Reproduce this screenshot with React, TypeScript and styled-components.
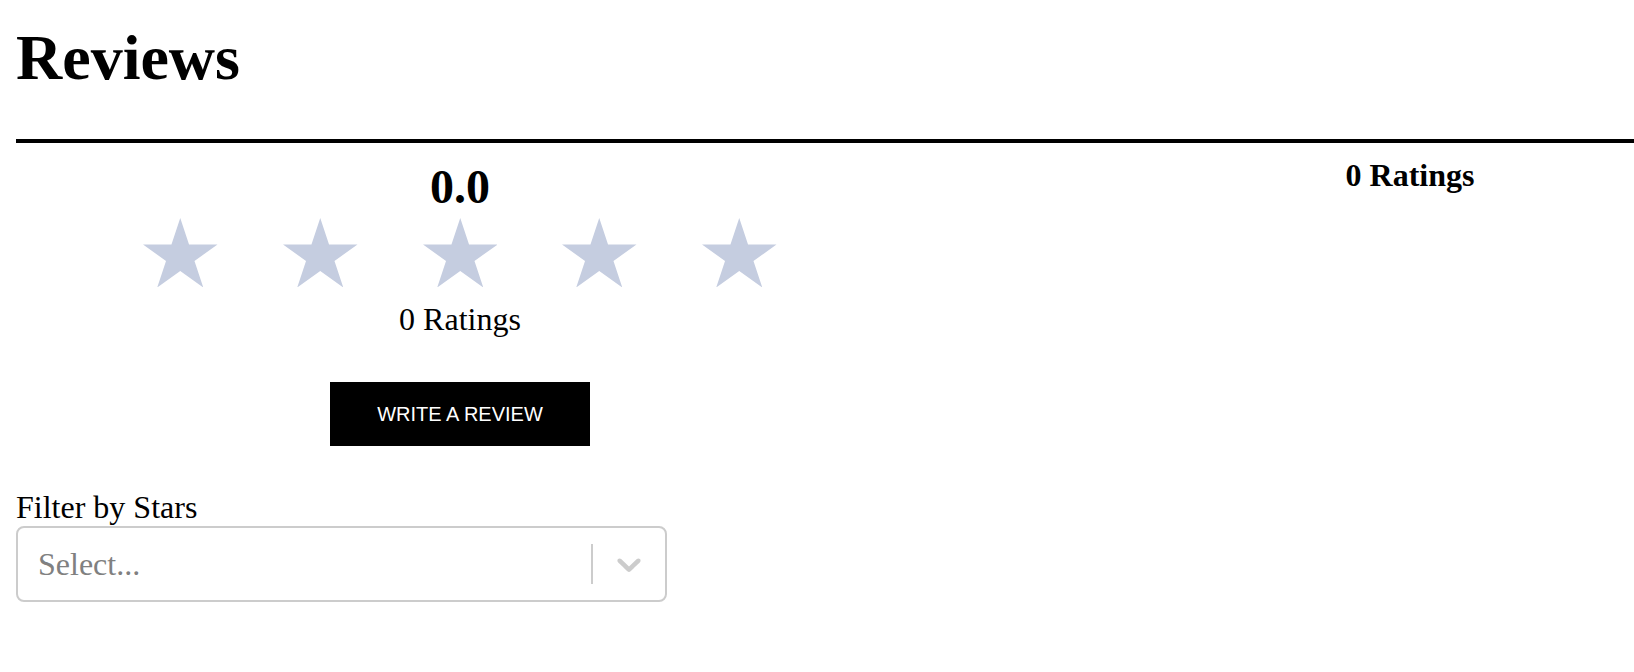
import React from "react";
import styled, { createGlobalStyle } from "styled-components";

const GlobalStyle = createGlobalStyle`
  html, body {
    margin: 0;
    padding: 0;
    background: #ffffff;
    overflow-x: hidden;
  }
  body {
    font-family: "Liberation Serif", "Times New Roman", Times, serif;
    font-size: 32px;
    color: #000000;
  }
  * { box-sizing: border-box; }
`;

const Page = styled.div`
  padding: 0 0 40px 16px;
`;

const Header = styled.header`
  padding: 21px 0 43.5px;
  border-bottom: 4px solid #000000;
`;

const Title = styled.h1`
  margin: 0;
  font-size: 64px;
  font-weight: 700;
  line-height: normal;
`;

const Summary = styled.section`
  display: flex;
  align-items: flex-start;
`;

const ScoreColumn = styled.div`
  width: 888px;
  display: flex;
  flex-direction: column;
  align-items: center;
`;

const Score = styled.h2`
  margin: 16px 0 0;
  font-size: 48px;
  font-weight: 700;
  line-height: normal;
`;

const StarRow = styled.div`
  margin-top: 4px;
  display: flex;
  gap: 65.2px;
`;

const StarIcon = styled.svg`
  display: block;
  width: 74.5px;
  height: 69.5px;
  fill: ${(p: { $filled?: boolean }) => (p.$filled ? "#ffd700" : "#c5cde0")};
`;

const RatingCount = styled.div`
  margin-top: 14px;
  font-size: 32px;
  line-height: normal;
`;

const WriteButton = styled.button`
  margin-top: 44px;
  width: 260px;
  height: 64px;
  border: none;
  border-radius: 0;
  background: #000000;
  color: #ffffff;
  font-family: "Liberation Sans", Arial, sans-serif;
  font-size: 20px;
  cursor: pointer;
`;

const Breakdown = styled.div`
  flex: 1;
  display: flex;
  justify-content: center;
  padding-left: 282px;
`;

const BreakdownTitle = styled.h4`
  margin: 14px 0 0;
  font-size: 32px;
  font-weight: 700;
  line-height: normal;
`;

const Filter = styled.div`
  margin-top: 43px;
  display: flex;
  flex-direction: column;
  align-items: flex-start;
`;

const FilterLabel = styled.label`
  font-size: 32px;
  line-height: normal;
`;

const SelectControl = styled.div`
  width: 651px;
  height: 76px;
  display: flex;
  align-items: stretch;
  border: 2px solid #cccccc;
  border-radius: 8px;
  background: #ffffff;
`;

const ValueContainer = styled.div`
  flex: 1;
  display: flex;
  align-items: center;
  padding: 4px 16px;
`;

const Placeholder = styled.span`
  margin: 0 4px;
  color: #808080;
  font-size: 32px;
`;

const Separator = styled.span`
  width: 2px;
  margin: 16px 0;
  background: #cccccc;
`;

const Indicator = styled.div`
  display: flex;
  align-items: center;
  padding: 16px;
  color: #cccccc;
`;

const Chevron = styled.svg`
  width: 40px;
  height: 40px;
  fill: currentColor;
`;

const Star = ({ filled }: { filled?: boolean }) => (
  <StarIcon
    $filled={filled}
    viewBox="-0.951 -1 1.902 1.809"
    preserveAspectRatio="none"
  >
    <polygon points="0,-1 0.2245,-0.309 0.951,-0.309 0.3633,0.118 0.588,0.809 0,0.382 -0.588,0.809 -0.3633,0.118 -0.951,-0.309 -0.2245,-0.309" />
  </StarIcon>
);

export default function App() {
  const rating = 0;
  const count = 0;
  return (
    <>
      <GlobalStyle />
      <Page>
        <Header>
          <Title>Reviews</Title>
        </Header>
        <Summary>
          <ScoreColumn>
            <Score>{rating.toFixed(1)}</Score>
            <StarRow>
              {[1, 2, 3, 4, 5].map((n) => (
                <Star key={n} filled={n <= rating} />
              ))}
            </StarRow>
            <RatingCount>{count} Ratings</RatingCount>
            <WriteButton>WRITE A REVIEW</WriteButton>
          </ScoreColumn>
          <Breakdown>
            <BreakdownTitle>{count} Ratings</BreakdownTitle>
          </Breakdown>
        </Summary>
        <Filter>
          <FilterLabel>Filter by Stars</FilterLabel>
          <SelectControl>
            <ValueContainer>
              <Placeholder>Select...</Placeholder>
            </ValueContainer>
            <Separator />
            <Indicator>
              <Chevron viewBox="0 0 20 20" aria-hidden="true">
                <path d="M4.516 7.548c0.436-0.446 1.043-0.481 1.576 0l3.908 3.747 3.908-3.747c0.533-0.481 1.141-0.446 1.574 0 0.436 0.445 0.408 1.197 0 1.615-0.406 0.418-4.695 4.502-4.695 4.502-0.217 0.223-0.502 0.335-0.787 0.335s-0.57-0.112-0.789-0.335c0 0-4.287-4.084-4.695-4.502s-0.436-1.17 0-1.615z" />
              </Chevron>
            </Indicator>
          </SelectControl>
        </Filter>
      </Page>
    </>
  );
}
